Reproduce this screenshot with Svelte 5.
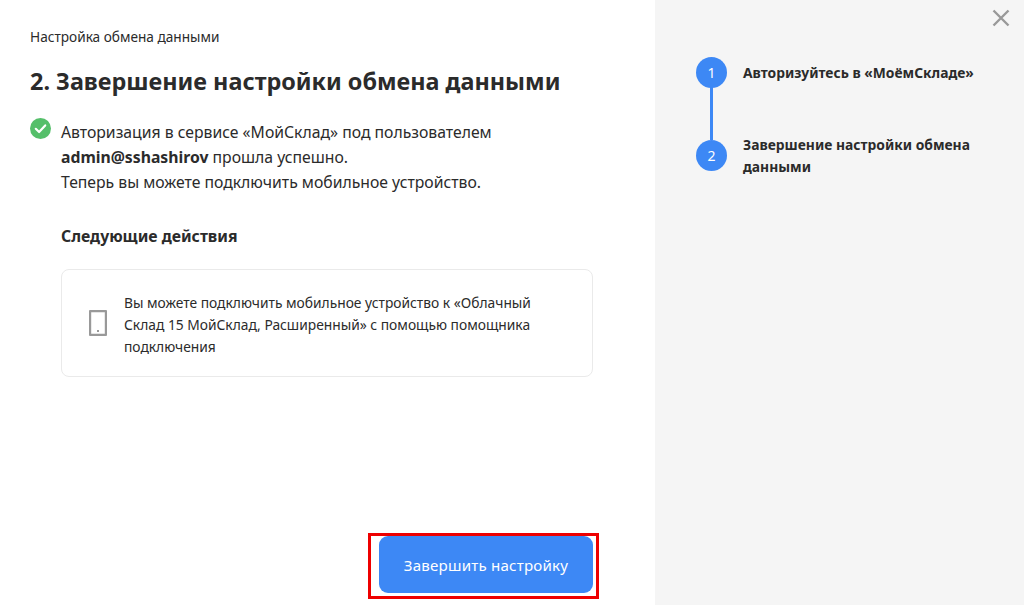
<script>
  const steps = [
    { n: 1, text: 'Авторизуйтесь в «МоёмСкладе»' },
    { n: 2, text: 'Завершение настройки обмена данными' }
  ];
</script>

<div class="page">
  <main class="main">
    <div class="crumb">Настройка обмена данными</div>
    <h1>2. Завершение настройки обмена данными</h1>

    <div class="status">
      <svg class="ok" width="21" height="21" viewBox="0 0 21 21" aria-hidden="true">
        <circle cx="10.5" cy="10.5" r="10.5" fill="#55bf6a" />
        <path d="M5.8 10.8l3.3 3.2 6.1-6.6" fill="none" stroke="#fff" stroke-width="2.2" stroke-linecap="round" stroke-linejoin="round" />
      </svg>
      <p>Авторизация в сервисе «МойСклад» под пользователем<br /><b>admin@sshashirov</b> прошла успешно.<br />Теперь вы можете подключить мобильное устройство.</p>
    </div>

    <section class="next">
      <h2>Следующие действия</h2>
      <div class="card">
        <svg class="phone" width="18" height="26" viewBox="0 0 18 26" aria-hidden="true">
          <rect x="1" y="1" width="16" height="24" rx="1" fill="none" stroke="#999" stroke-width="2.4" />
          <rect x="8" y="20" width="2" height="2" fill="#999" />
        </svg>
        <p>Вы можете подключить мобильное устройство к «Облачный Склад 15 МойСклад, Расширенный» с помощью помощника подключения</p>
      </div>
    </section>

    <footer class="foot">
      <div class="mark">
        <button type="button">Завершить настройку</button>
      </div>
    </footer>
  </main>

  <aside class="side">
    <button class="close" type="button" aria-label="Закрыть">
      <svg width="18" height="18" viewBox="0 0 18 18" aria-hidden="true">
        <path d="M1.5 1.5l15 15M16.5 1.5l-15 15" stroke="#999" stroke-width="2.4" fill="none" />
      </svg>
    </button>
    <ol class="steps">
      {#each steps as s}
        <li class="step">
          <span class="num">{s.n}</span>
          <span class="label">{s.text}</span>
        </li>
      {/each}
    </ol>
  </aside>
</div>

<style>
  :global(body) {
    margin: 0;
    background: #fff;
  }
  .page {
    display: flex;
    width: 1024px;
    height: 605px;
    overflow: hidden;
    font-family: "Noto Sans", "Open Sans", sans-serif;
    color: #2b2b2b;
  }
  .main {
    box-sizing: border-box;
    width: 655px;
    height: 605px;
    padding: 28px 62px 6px 30px;
    display: flex;
    flex-direction: column;
  }
  .crumb {
    font-size: 13.65px;
    line-height: 18px;
  }
  h1 {
    margin: 16px 0 0;
    font-size: 23.4px;
    line-height: 38px;
    font-weight: 700;
  }
  .status {
    display: flex;
    align-items: flex-start;
    gap: 10px;
    margin-top: 14px;
  }
  .ok {
    flex: none;
    margin-top: 4px;
  }
  .status p {
    margin: 6px 0 0;
    font-size: 15.75px;
    line-height: 25px;
  }
  .status b {
    font-weight: 700;
  }
  .next {
    margin: 29px 0 0 31px;
  }
  h2 {
    margin: 0;
    font-size: 15.8px;
    line-height: 24px;
    font-weight: 700;
  }
  .card {
    box-sizing: border-box;
    display: flex;
    align-items: center;
    gap: 17px;
    height: 108px;
    margin-top: 21px;
    padding: 0 50px 0 27px;
    border: 1px solid #eaeaea;
    border-radius: 8px;
  }
  .phone {
    flex: none;
  }
  .card p {
    margin: 0;
    padding-top: 3px;
    font-size: 13.8px;
    line-height: 22px;
  }
  .foot {
    margin-top: auto;
    display: flex;
    justify-content: flex-end;
  }
  .mark {
    border: 3px solid #ee0000;
    padding: 0 3px 3px 8px;
    margin-right: -6px;
  }
  .mark button {
    display: block;
    width: 214px;
    height: 57px;
    border: 0;
    border-radius: 9px;
    background: #3d88f5;
    color: #fff;
    font: 400 15.1px "Noto Sans", "Open Sans", sans-serif;
    letter-spacing: 0.2px;
  }
  .side {
    position: relative;
    box-sizing: border-box;
    flex: 1;
    height: 605px;
    background: #f5f5f5;
    padding: 57px 40px 0 41px;
  }
  .close {
    position: absolute;
    top: 9px;
    right: 14px;
    padding: 0;
    border: 0;
    background: none;
    line-height: 0;
  }
  .steps {
    list-style: none;
    margin: 0;
    padding: 0;
  }
  .step {
    position: relative;
    display: flex;
    align-items: flex-start;
    gap: 16px;
    font-size: 13.85px;
    font-weight: 700;
    line-height: 22px;
  }
  .step:first-child {
    height: 83px;
  }
  .step:first-child::after {
    content: "";
    position: absolute;
    left: 14px;
    top: 30px;
    bottom: 0;
    width: 3px;
    background: #3d88f5;
  }
  .num {
    flex: none;
    width: 31px;
    height: 31px;
    border-radius: 50%;
    background: #3d88f5;
    color: #fff;
    font-size: 14px;
    font-weight: 400;
    line-height: 31px;
    text-align: center;
  }
  .label {
    margin-top: 5px;
  }
  .step:last-child .label {
    margin-top: -6px;
  }
</style>
